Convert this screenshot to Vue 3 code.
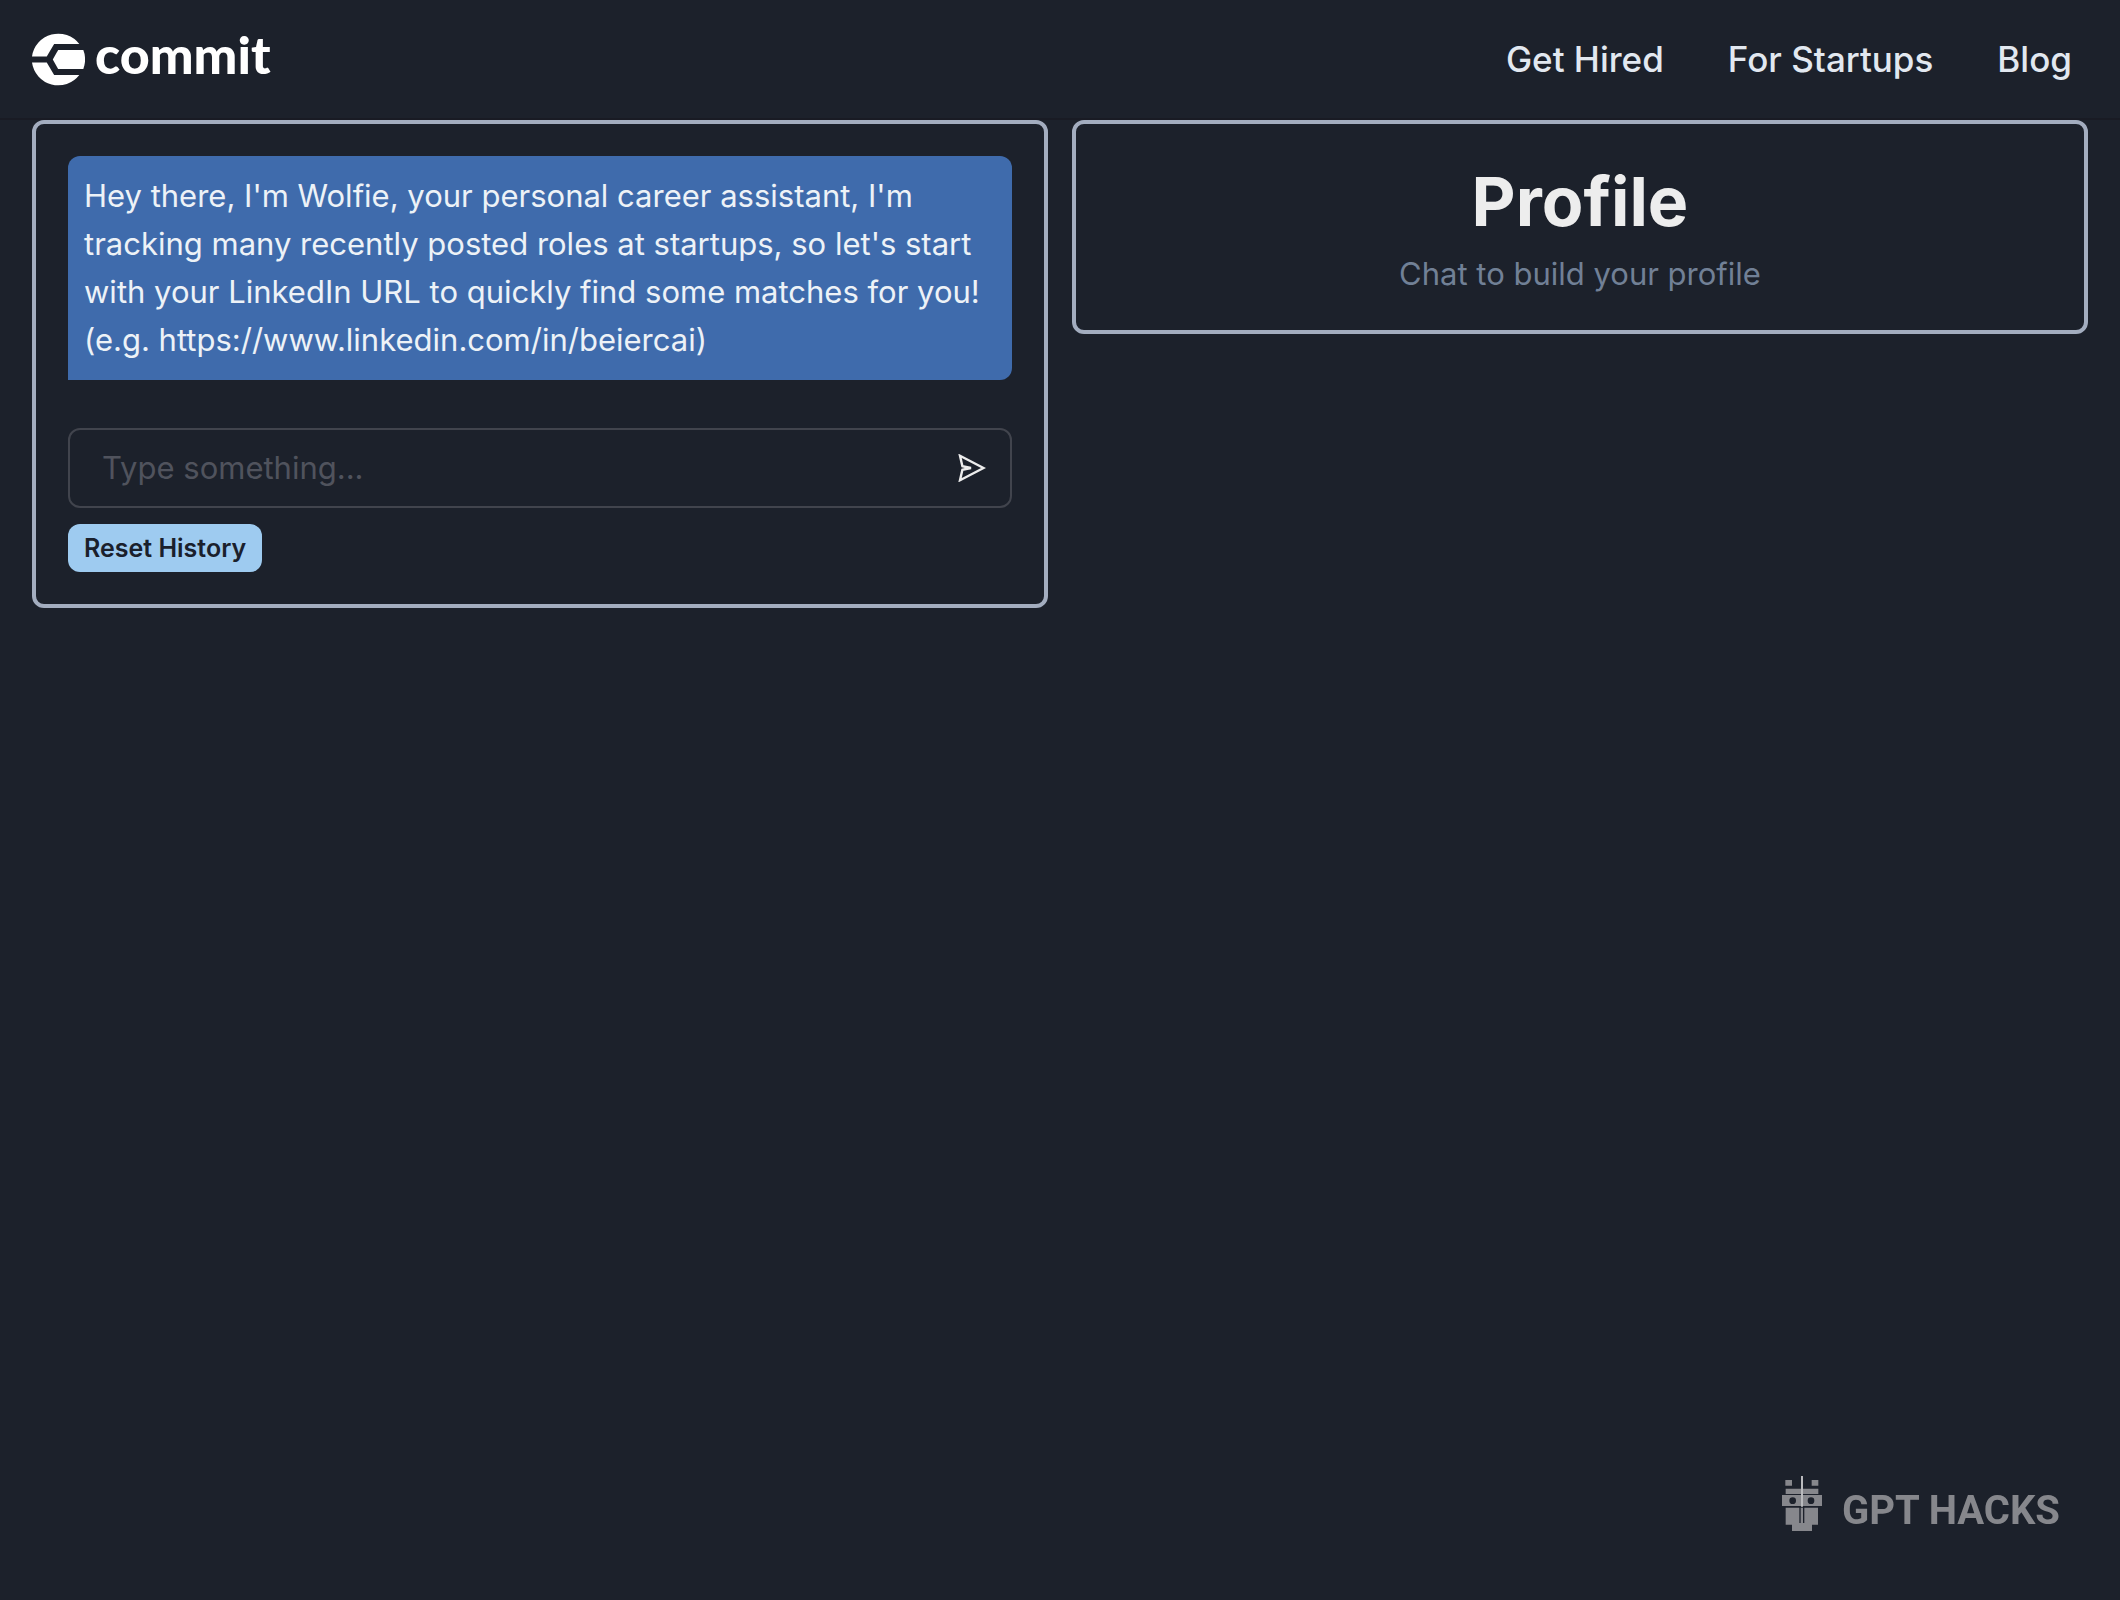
<script setup>
import { ref } from 'vue'

const links = [
  { label: 'Get Hired', href: '#get-hired' },
  { label: 'For Startups', href: '#for-startups' },
  { label: 'Blog', href: '#blog' },
]

const greeting =
  "Hey there, I'm Wolfie, your personal career assistant, I'm tracking many recently posted roles at startups, so let's start with your LinkedIn URL to quickly find some matches for you! (e.g. https://www.linkedin.com/in/beiercai)"

const messages = ref([greeting])
const draft = ref('')

function send() {
  const text = draft.value.trim()
  if (!text) return
  messages.value.push(text)
  draft.value = ''
}

function resetHistory() {
  messages.value = [greeting]
}
</script>

<template>
  <div class="page">
    <header class="header">
      <a href="#" class="brand">
        <svg class="brand__mark" viewBox="96 98 158 158" aria-hidden="true">
          <path d="M96 168 A79 79 0 0 1 237 131 H162 L140 168 Z" />
          <path d="M96 186 A79 79 0 0 0 237 223 H162 L140 186 Z" />
          <path d="M174 149 H249 A79 79 0 0 1 249 205 H174 L158 177 Z" />
        </svg>
        <span class="brand__name">commit</span>
      </a>

      <nav class="nav">
        <a v-for="link in links" :key="link.label" :href="link.href" class="nav__link">
          {{ link.label }}
        </a>
      </nav>
    </header>

    <main class="columns">
      <section class="panel">
        <p v-for="(message, i) in messages" :key="i" class="bubble">{{ message }}</p>

        <form class="composer" @submit.prevent="send">
          <input
            v-model="draft"
            type="text"
            class="composer__input"
            aria-label="Message"
            placeholder="Type something..."
          />
          <button type="submit" class="composer__send" aria-label="Send">
            <svg viewBox="0 0 28 28" width="28" height="28" aria-hidden="true">
              <path d="M2 1.8 L25.5 14 L2 26.2 L4.4 15.7 L13 14 L4.4 12.3 Z" />
            </svg>
          </button>
        </form>

        <button type="button" class="reset" @click="resetHistory">Reset History</button>
      </section>

      <section class="panel profile">
        <h1 class="profile__title">Profile</h1>
        <p class="profile__hint">Chat to build your profile</p>
      </section>
    </main>

    <footer class="badge">
      <svg class="badge__robot" viewBox="66 54 120 165" aria-hidden="true">
        <path d="M76 66h20v17H76zM155 66h20v17h-20zM77 92h98v16H77z" />
        <path
          fill-rule="evenodd"
          d="M66 111h120v33H66zM98 118a10 10 0 1 0 0 20a10 10 0 1 0 0-20zM153 118a10 10 0 1 0 0 20a10 10 0 1 0 0-20z"
        />
        <path d="M77 149h41v46h4v-46h7v46h4v-46h41v51h-18v19H96v-19H77z" />
        <path class="badge__antenna" d="M123 54h6v92h-6z" />
      </svg>
      <span class="badge__name">GPT HACKS</span>
    </footer>
  </div>
</template>

<style>
body {
  background: #1c212b;
}
</style>

<style scoped>
.page {
  min-height: 100vh;
  background: #1c212b;
  color: #ededed;
  font-family: Inter, 'Liberation Sans', sans-serif;
  font-size: 31px;
  line-height: 48px;
}

/* Header */
.header {
  display: flex;
  align-items: center;
  justify-content: space-between;
  height: 118px;
  padding: 0 48px 0 32px;
  border-bottom: 2px solid #191b24;
}

.brand {
  display: flex;
  align-items: center;
  gap: 10px;
  color: #fff;
  text-decoration: none;
}

.brand__mark {
  width: 53px;
  height: 53px;
  fill: currentColor;
}

.brand__name {
  padding-bottom: 10px;
  font-family: Lato, sans-serif;
  font-size: 52px;
  font-weight: 900;
}

.nav {
  display: flex;
  gap: 64px;
}

.nav__link {
  color: #e2e8f0;
  font-size: 35px;
  font-weight: 500;
  text-decoration: none;
}

/* Columns */
.columns {
  display: grid;
  grid-template-columns: 1fr 1fr;
  align-items: start;
  gap: 24px;
  padding: 0 32px;
}

.panel {
  padding: 32px;
  border: 4px solid #a3adbf;
  border-radius: 12px;
}

/* Chat */
.bubble {
  margin: 0 0 48px;
  padding: 16px;
  border-radius: 12px 12px 12px 0;
  background: #3f6bac;
  color: #edf2f7;
}

.composer {
  display: flex;
  align-items: center;
  height: 76px;
  margin-bottom: 16px;
  padding: 0 24px 0 32px;
  border: 2px solid #41444d;
  border-radius: 12px;
}

.composer:focus-within {
  border-color: #63b3ed;
}

.composer__input {
  flex: 1;
  min-width: 0;
  padding: 0;
  border: 0;
  outline: 0;
  background: none;
  color: inherit;
  font: inherit;
}

.composer__input::placeholder {
  color: #50535d;
  opacity: 1;
}

.composer__send {
  display: flex;
  padding: 0;
  border: 0;
  background: none;
  color: #ededed;
  cursor: pointer;
}

.composer__send path {
  fill: none;
  stroke: currentColor;
  stroke-width: 2.4;
}

.reset {
  display: block;
  height: 48px;
  padding: 0 16px;
  border: 0;
  border-radius: 12px;
  background: #9ecbf0;
  color: #1a202c;
  font-family: inherit;
  font-size: 25px;
  font-weight: 600;
  cursor: pointer;
}

/* Profile */
.profile {
  text-align: center;
}

.profile__title {
  margin: 0 0 4px;
  font-size: 68px;
  font-weight: 700;
  line-height: 90px;
}

.profile__hint {
  margin: 0;
  color: #718096;
}

/* Badge over the page corner */
.badge {
  position: fixed;
  right: 60px;
  bottom: 65px;
  display: flex;
  align-items: center;
  gap: 20px;
  color: #86878c;
}

.badge__robot {
  width: 40px;
  height: 55px;
  fill: currentColor;
}

.badge__antenna {
  fill: #b9babd;
}

.badge__name {
  padding-top: 16px;
  font-family: Roboto, sans-serif;
  font-size: 40px;
  font-weight: 700;
}
</style>
